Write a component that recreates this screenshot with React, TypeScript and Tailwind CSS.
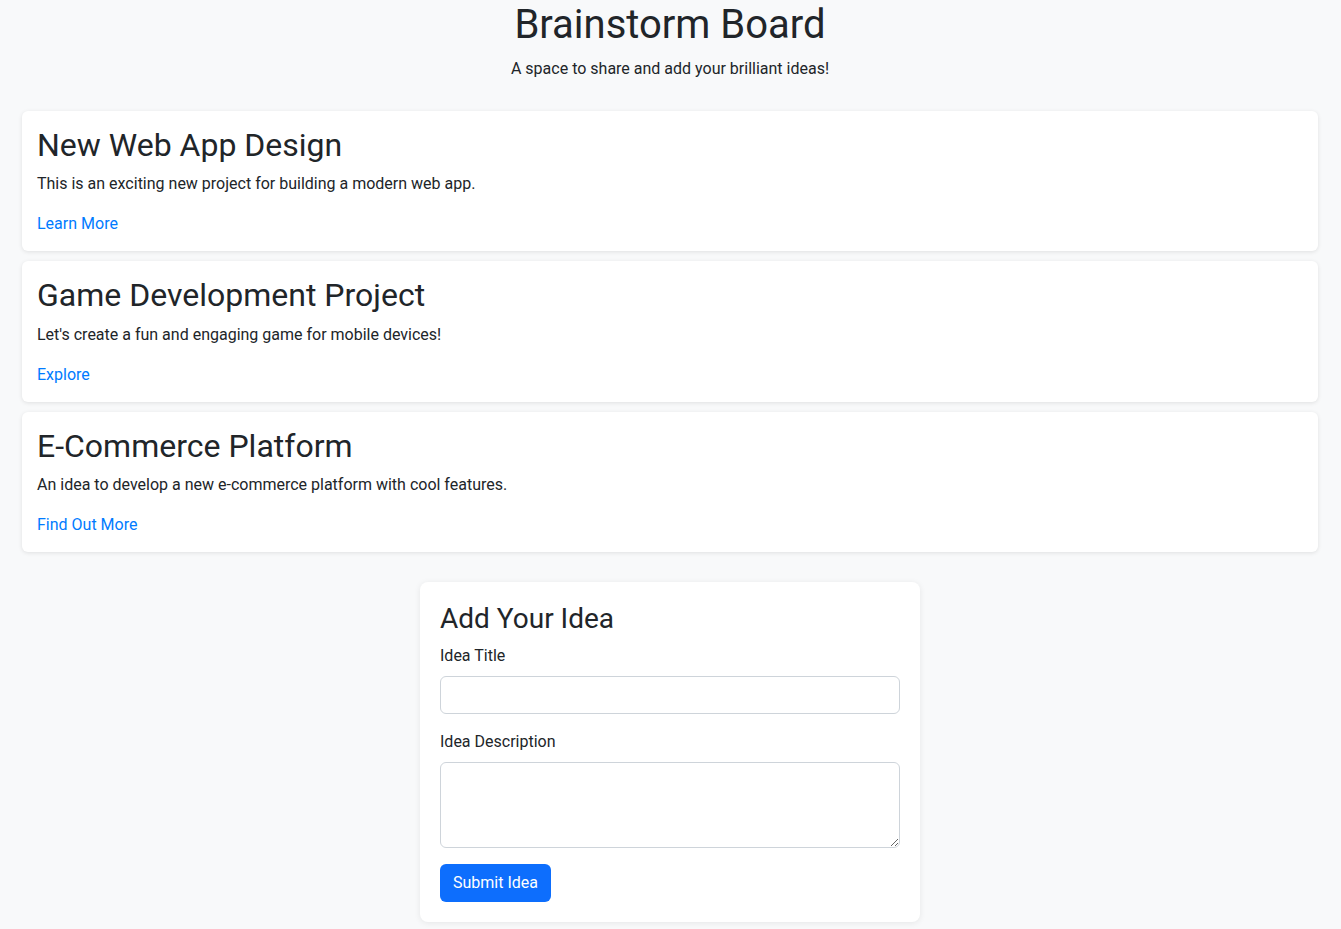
import React, { useState } from 'react';

type Idea = {
  title: string;
  description: string;
  linkText: string;
};

const initialIdeas: Idea[] = [
  {
    title: 'New Web App Design',
    description: 'This is an exciting new project for building a modern web app.',
    linkText: 'Learn More',
  },
  {
    title: 'Game Development Project',
    description: "Let's create a fun and engaging game for mobile devices!",
    linkText: 'Explore',
  },
  {
    title: 'E-Commerce Platform',
    description: 'An idea to develop a new e-commerce platform with cool features.',
    linkText: 'Find Out More',
  },
];

export default function App() {
  const [ideas, setIdeas] = useState<Idea[]>(initialIdeas);
  const [title, setTitle] = useState('');
  const [description, setDescription] = useState('');

  const handleSubmit = (e: React.FormEvent) => {
    e.preventDefault();
    if (!title.trim()) return;
    setIdeas([...ideas, { title, description, linkText: 'Learn More' }]);
    setTitle('');
    setDescription('');
  };

  return (
    <div className="min-h-screen bg-[#f8f9fa] text-[#212529] font-['Roboto',sans-serif] pr-px pb-2">
      <header className="text-center pt-px mb-[30px]">
        <h1 className="text-[40px] leading-[1.2] font-normal mb-2">Brainstorm Board</h1>
        <p className="text-base leading-6">A space to share and add your brilliant ideas!</p>
      </header>

      <div className="mx-[22px] flex flex-col gap-[10px]">
        {ideas.map((idea, i) => (
          <div
            key={i}
            className="bg-white rounded-md shadow-[0_1px_4px_rgba(0,0,0,0.1)] p-[15px]"
          >
            <h2 className="text-[32px] leading-[1.2] font-normal mb-2">{idea.title}</h2>
            <p className="text-base leading-6 mb-4">{idea.description}</p>
            <a href="#" className="text-base leading-6 text-[#007bff] hover:underline">
              {idea.linkText}
            </a>
          </div>
        ))}
      </div>

      <form
        onSubmit={handleSubmit}
        className="w-[500px] mx-auto mt-[30px] bg-white rounded-lg shadow-[0_1px_6px_rgba(0,0,0,0.08)] p-5"
      >
        <h3 className="text-[28px] leading-[1.2] font-normal mb-2">Add Your Idea</h3>
        <label className="block text-base leading-6 mb-2">Idea Title</label>
        <input
          type="text"
          value={title}
          onChange={(e) => setTitle(e.target.value)}
          className="block w-full h-[38px] px-3 border border-[#ced4da] rounded-md bg-white mb-4 outline-none focus:border-[#86b7fe]"
        />
        <label className="block text-base leading-6 mb-2">Idea Description</label>
        <textarea
          rows={3}
          value={description}
          onChange={(e) => setDescription(e.target.value)}
          className="block w-full h-[86px] px-3 py-1.5 border border-[#ced4da] rounded-md bg-white mb-4 outline-none focus:border-[#86b7fe]"
        />
        <button
          type="submit"
          className="h-[38px] px-[13px] rounded-md bg-[#0d6efd] text-white text-base hover:bg-[#0b5ed7]"
        >
          Submit Idea
        </button>
      </form>
    </div>
  );
}
